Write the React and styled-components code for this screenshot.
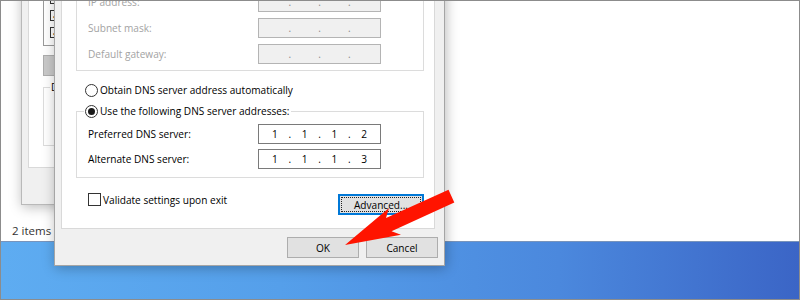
import React from "react"
import styled, { createGlobalStyle } from "styled-components"

const GlobalStyle = createGlobalStyle`
  html, body {
    margin: 0;
    padding: 0;
  }
  body {
    font-family: "Open Sans", "Liberation Sans", sans-serif;
    font-size: 10.1px;
    color: #000;
  }
`

const Screen = styled.div`
  position: relative;
  width: 800px;
  height: 300px;
  box-sizing: border-box;
  border: 1px solid #8c8c8c;
  overflow: hidden;
  display: flex;
  flex-direction: column;
  background: #fff;
`

const Explorer = styled.div`
  flex: 1;
  display: flex;
  flex-direction: column;
  justify-content: flex-end;
  background: #fff;
`

const StatusBar = styled.div`
  height: 21px;
  padding-left: 11px;
  display: flex;
  align-items: center;
  font-size: 11.5px;
  color: #333;
`

const Taskbar = styled.div`
  height: 58px;
  box-sizing: border-box;
  border-top: 1px solid #7894bb;
  background: linear-gradient(90deg, #5eacf1 0%, #559fea 35%, #4b88dd 70%, #3b65c6 100%);
`

/* windows on the desktop */
const Window = styled.div`
  position: absolute;
  left: ${p => p.$left}px;
  top: ${p => p.$top}px;
  bottom: ${p => p.$bottom}px;
  width: ${p => p.$width}px;
  box-sizing: border-box;
  display: flex;
  flex-direction: column;
  padding: ${p => p.$pad || "0"};
  background: #f0f0f0;
  border: 1px solid ${p => p.$edge};
  box-shadow: 1px 2px 12px rgba(0, 0, 0, 0.28);
`

const TabPage = styled.div`
  flex: 1;
  min-height: 0;
  overflow: hidden;
  display: flex;
  flex-direction: column;
  justify-content: flex-end;
  background: #fff;
  border: 1px solid #d9d9d9;
  padding: ${p => p.$pad};
  margin: ${p => p.$margin || "0"};
`

const Footer = styled.div`
  display: flex;
  justify-content: flex-end;
  gap: 7px;
  margin-top: 8px;
`

const Button = styled.div`
  width: ${p => p.$width}px;
  height: 21px;
  box-sizing: border-box;
  flex-shrink: 0;
  display: flex;
  align-items: center;
  justify-content: center;
  background: ${p => p.$bg || "#e1e1e1"};
  border: 1px solid ${p => (p.$focused ? "#0078d7" : "#adadad")};
  box-shadow: ${p => (p.$focused ? "inset 0 0 0 1px #0078d7" : "none")};
  padding: ${p => (p.$focused ? "2px" : "0")};
  margin-top: ${p => p.$mt || 0}px;
  color: #000;
  white-space: nowrap;
`

const FocusRing = styled.span`
  flex: 1;
  align-self: stretch;
  display: flex;
  align-items: center;
  justify-content: center;
  border: 1px dotted #222;
`

const Group = styled.fieldset`
  margin: ${p => p.$mt || 0}px 0 0 0;
  min-width: 0;
  border: 1px solid #dcdcdc;
  padding: ${p => p.$pad};
  display: flex;
  flex-direction: column;
  gap: ${p => p.$gap || 0}px;
`

const Legend = styled.legend`
  margin-left: -4px;
  padding: 0 2px 0 1px;
  display: flex;
  align-items: center;
  gap: 2px;
  height: 14px;
  white-space: nowrap;
`

const Line = styled.div`
  line-height: 14px;
`

const ChoiceRow = styled.div`
  display: flex;
  align-items: center;
  gap: 2px;
  height: 14px;
  padding-left: ${p => p.$indent || 0}px;
  margin-top: ${p => p.$mt || 0}px;
`

const Radio = styled.span`
  width: 13px;
  height: 13px;
  box-sizing: border-box;
  border: 1px solid #333;
  border-radius: 50%;
  background: #fff;
  display: inline-flex;
  align-items: center;
  justify-content: center;
  flex-shrink: 0;

  &::after {
    content: "";
    width: 7px;
    height: 7px;
    border-radius: 50%;
    background: #1a1a1a;
    display: ${p => (p.$checked ? "block" : "none")};
  }
`

const Checkbox = styled.span`
  width: 13px;
  height: 13px;
  box-sizing: border-box;
  border: 1px solid #333;
  background: #fff;
  flex-shrink: 0;
`

const FieldRow = styled.div`
  display: flex;
  align-items: center;
  justify-content: space-between;
  height: 20px;
`

const FieldLabel = styled.span`
  color: ${p => (p.$disabled ? "#a3a3a3" : "#000")};
`

const IpBox = styled.div`
  width: 123px;
  height: 20px;
  box-sizing: border-box;
  display: flex;
  align-items: center;
  padding: 0 2px;
  border: 1px solid ${p => (p.$disabled ? "#b4b4b4" : "#7a7a7a")};
  background: ${p => (p.$disabled ? "#f0f0f0" : "#fff")};
  color: ${p => (p.$disabled ? "#8a8a8a" : "#000")};
`

const Octet = styled.span`
  flex: 1;
  text-align: center;
`

const Dot = styled.span`
  width: 2px;
  display: flex;
  justify-content: center;
`

const BottomRow = styled.div`
  display: flex;
  justify-content: space-between;
  align-items: flex-start;
  padding-left: 12px;
  margin-top: 15px;
`

const CheckLabel = styled.div`
  display: flex;
  align-items: center;
  gap: 2px;
  height: 13px;
`

/* back dialog parts */
const ListBox = styled.div`
  height: 90px;
  box-sizing: border-box;
  border: 1px solid #9a9a9a;
  background: #fff;
  display: flex;
  flex-direction: column;
  justify-content: flex-end;
  padding: 0 0 6px 6px;
  gap: 3px;
`

const ListItem = styled.div`
  display: flex;
  align-items: center;
  gap: 4px;
  height: 14px;
  white-space: nowrap;
`

const MiniCheck = styled.span`
  width: 11px;
  height: 11px;
  box-sizing: border-box;
  border: 1px solid #333;
  background: #fff;
  display: inline-flex;
  align-items: center;
  justify-content: center;
  font-size: 9px;
  line-height: 1;
`

const Arrow = styled.svg`
  position: absolute;
  left: 0;
  top: 0;
  pointer-events: none;
`

const IpField = ({ value, disabled }) => {
  const parts = value ? value.split(".") : ["", "", "", ""]
  return (
    <IpBox $disabled={disabled}>
      {parts.map((p, i) => (
        <React.Fragment key={i}>
          <Octet>{p}</Octet>
          {i < 3 && <Dot>.</Dot>}
        </React.Fragment>
      ))}
    </IpBox>
  )
}

export default function App() {
  return (
    <>
      <GlobalStyle />
      <Screen>
        <Explorer>
          <StatusBar>2 items</StatusBar>
        </Explorer>
        <Taskbar />

        <Window $left={20} $top={-60} $bottom={94} $width={300} $edge="#b9b9b9">
          <TabPage $pad="0 10px 21px 14px" $margin="0 6px 36px 6px">
            <ListBox>
              <ListItem><MiniCheck>✓</MiniCheck>Client for Microsoft Networks</ListItem>
              <ListItem><MiniCheck>✓</MiniCheck>File and Printer Sharing</ListItem>
              <ListItem><MiniCheck>✓</MiniCheck>Internet Protocol Version 4</ListItem>
            </ListBox>
            <Button $width={80} $bg="#c9c9c9" $mt={9}>Install...</Button>
            <Group $pad="4px 10px 47px 10px" $mt={4}>
              <Legend>Description</Legend>
            </Group>
          </TabPage>
        </Window>

        <Window $left={53} $top={-80} $bottom={33} $width={391} $edge="#a5a5a5" $pad="0 6px 7px 6px">
          <TabPage $pad="0 10px 13px 14px" $margin="0 3px 0 0">
            <Line>You can get IP settings assigned automatically if your network supports this capability.</Line>
            <ChoiceRow $indent={9} $mt={8}>
              <Radio $checked />
              Obtain an IP address automatically
            </ChoiceRow>
            <Group $pad="5px 42px 6px 11px" $gap={6} $mt={6}>
              <Legend>
                <Radio />
                Use the following IP address:
              </Legend>
              <FieldRow>
                <FieldLabel $disabled>IP address:</FieldLabel>
                <IpField disabled />
              </FieldRow>
              <FieldRow>
                <FieldLabel $disabled>Subnet mask:</FieldLabel>
                <IpField disabled />
              </FieldRow>
              <FieldRow>
                <FieldLabel $disabled>Default gateway:</FieldLabel>
                <IpField disabled />
              </FieldRow>
            </Group>
            <ChoiceRow $indent={9} $mt={12}>
              <Radio />
              Obtain DNS server address automatically
            </ChoiceRow>
            <Group $pad="6px 42px 8px 11px" $gap={5} $mt={7}>
              <Legend>
                <Radio $checked />
                Use the following DNS server addresses:
              </Legend>
              <FieldRow>
                <FieldLabel>Preferred DNS server:</FieldLabel>
                <IpField value="1.1.1.2" />
              </FieldRow>
              <FieldRow>
                <FieldLabel>Alternate DNS server:</FieldLabel>
                <IpField value="1.1.1.3" />
              </FieldRow>
            </Group>
            <BottomRow>
              <CheckLabel>
                <Checkbox />
                Validate settings upon exit
              </CheckLabel>
              <Button $width={86} $focused $mt={1}>
                <FocusRing>Advanced...</FocusRing>
              </Button>
            </BottomRow>
          </TabPage>
          <Footer>
            <Button $width={72}>OK</Button>
            <Button $width={72}>Cancel</Button>
          </Footer>
        </Window>

        <Arrow width="798" height="298" viewBox="1 1 798 298">
          <polygon
            points="345,245 389,208 386,218 448.5,189.7 454.3,202.5 391.5,231.3 401,234.7"
            fill="#ff1400"
          />
        </Arrow>
      </Screen>
    </>
  )
}
